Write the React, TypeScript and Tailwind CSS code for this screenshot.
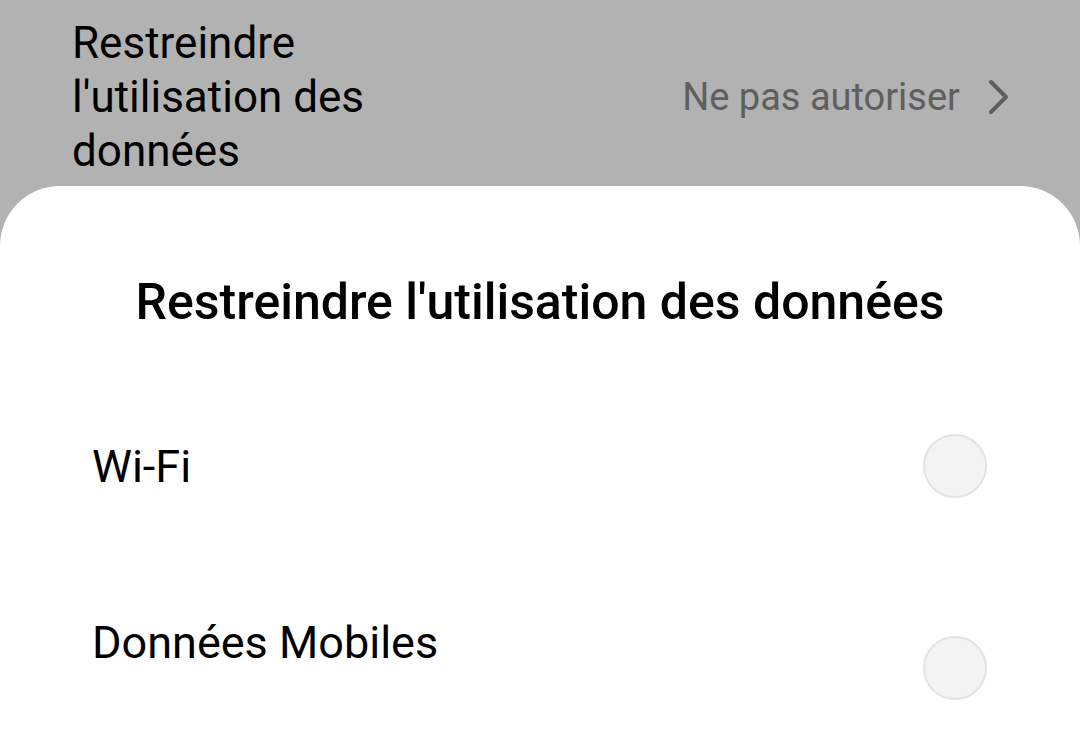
import React from 'react';

const options = [
  { id: 'wifi', label: 'Wi-Fi', rowClass: 'h-[164px] pt-[10px]', circleClass: 'mt-[-6px]' },
  { id: 'mobile', label: 'Données Mobiles', rowClass: 'h-[176px] pt-[22px]', circleClass: 'mt-[20px]' },
];

const App: React.FC = () => {
  return (
    <div className="w-[1080px] h-[749px] overflow-hidden bg-[#b2b2b2] flex flex-col font-['Roboto',sans-serif]">
      {/* Settings row behind the sheet */}
      <div className="h-[186px] shrink-0 flex items-start pt-[16px] pl-[72px] pr-[70px]">
        <div className="flex-1 flex items-center">
          <p className="flex-1 text-[44px] leading-[54px] text-black max-w-[330px]">
            Restreindre l'utilisation des données
          </p>
          <div className="ml-auto flex items-center gap-[28px] text-[#5f5f5f]">
            <span className="text-[38px] leading-[54px]">Ne pas autoriser</span>
            <svg width="22" height="36" viewBox="0 0 22 36" fill="none">
              <path d="M3 3 L18 18 L3 33" stroke="#5f5f5f" strokeWidth="4" strokeLinecap="round" strokeLinejoin="round" />
            </svg>
          </div>
        </div>
      </div>

      {/* Bottom sheet */}
      <div className="flex-1 bg-white rounded-t-[60px] flex flex-col">
        <h2 className="pt-[86px] text-center text-[50px] leading-[60px] font-medium text-black">
          Restreindre l'utilisation des données
        </h2>
        <div className="mt-[98px] flex flex-col">
          {options.map((opt) => (
            <div key={opt.id} className={`flex items-start pl-[92px] pr-[93px] ${opt.rowClass}`}>
              <span className="flex-1 text-[45px] leading-[54px] text-black">{opt.label}</span>
              <span className={`w-[64px] h-[64px] rounded-full bg-[#f3f3f3] border-2 border-[#e3e3e3] ${opt.circleClass}`} />
            </div>
          ))}
        </div>
      </div>
    </div>
  );
};

export default App;
